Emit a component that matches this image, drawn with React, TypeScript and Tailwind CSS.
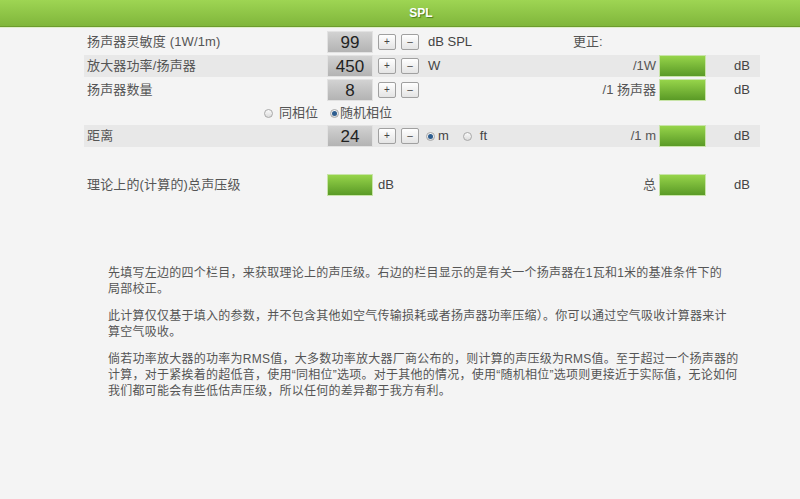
import React from "react";

const font = { fontFamily: '"Liberation Sans", Arial, "Noto Sans CJK SC", sans-serif' };

function NumBox({ value }: { value?: string }) {
  return (
    <div className="w-[46px] h-[22px] flex items-center justify-center bg-gradient-to-b from-[#d2d2d2] to-[#b3b3b3] border border-[#e2e2e2] text-[17px] text-[#222] leading-none">
      {value}
    </div>
  );
}

function GreenBox({ wide }: { wide?: boolean }) {
  return (
    <div className={`${wide ? "w-[46px]" : "w-[47px]"} h-[22px] bg-gradient-to-b from-[#96d44a] to-[#5a9a26] border border-[#c8e4a8]`} />
  );
}

function StepBtn({ label }: { label: string }) {
  return (
    <button className="w-[18px] h-[16px] flex items-center justify-center border border-[#a0a0a0] rounded-[2px] bg-gradient-to-b from-white to-[#e4e4e4] text-[10px] text-[#444] leading-none">
      {label}
    </button>
  );
}

function Radio({ checked }: { checked?: boolean }) {
  return (
    <span className="w-[9px] h-[9px] rounded-full border border-[#a8a8a8] bg-gradient-to-b from-[#fafafa] to-[#dcdcdc] flex items-center justify-center">
      {checked && <span className="w-[5px] h-[5px] rounded-full bg-[#2d5d8f]" />}
    </span>
  );
}

interface RowProps {
  label: string;
  value?: string;
  unit?: React.ReactNode;
  corr?: string;
  corrLeft?: boolean;
  result?: boolean;
  shaded?: boolean;
  steppers?: boolean;
}

function Row({ label, value, unit, corr, corrLeft, result = true, shaded, steppers = true }: RowProps) {
  return (
    <div className={`flex items-center h-[22px] ${shaded ? "bg-[#e8e8e8]" : ""}`}>
      <div className="w-[243px] pl-[3px] text-[13px] text-[#555] tracking-[0.15px]">{label}</div>
      {value !== undefined ? <NumBox value={value} /> : <GreenBox wide />}
      {steppers && (
        <div className="flex gap-[5px] ml-[5px]">
          <StepBtn label="+" />
          <StepBtn label="–" />
        </div>
      )}
      <div className={`flex-1 text-[13px] text-[#444] flex items-center ${steppers ? "pl-[9px]" : "pl-[5px]"}`}>{unit}</div>
      <div className={`w-[83px] text-[13px] text-[#555] ${corrLeft ? "text-left" : "text-right"}`}>{corr}</div>
      {result ? <div className="ml-[3px]"><GreenBox /></div> : <div className="ml-[3px] w-[47px]" />}
      <div className="w-[54px] text-right pr-[10px] text-[13px] text-[#444]">{result ? "dB" : ""}</div>
    </div>
  );
}

export default function App() {
  return (
    <div className="w-[800px] h-[499px] bg-[#f4f4f4] overflow-hidden" style={font}>
      <div className="h-[27px] bg-gradient-to-b from-[#9ed553] to-[#80b63b] border-b border-[#6c9c2c] flex items-center justify-center pl-[42px]">
        <span className="text-white text-[12px] font-bold [text-shadow:1px_1px_1px_#4e7d1e]">SPL</span>
      </div>
      <div className="h-[1px] bg-[#dfeecb]" />

      <div className="ml-[84px] w-[676px] mt-[3px] flex flex-col gap-[2px]">
        <Row label="扬声器灵敏度 (1W/1m)" value="99" unit="dB SPL" corr="更正:" corrLeft result={false} />
        <Row label="放大器功率/扬声器" value="450" unit="W" corr="/1W" shaded />
        <Row label="扬声器数量" value="8" corr="/1 扬声器" />
        <div className="h-[20px] flex items-center pl-[180px] text-[13px] text-[#555]">
          <Radio />
          <span className="ml-[6px] mr-[12px]">同相位</span>
          <Radio checked />
          <span className="ml-[1px]">随机相位</span>
        </div>
        <Row
          label="距离"
          value="24"
          shaded
          corr="/1 m"
          unit={
            <>
              <span className="-ml-[2px]"><Radio checked /></span>
              <span className="ml-[3px] mr-[14px]">m</span>
              <Radio />
              <span className="ml-[8px]">ft</span>
            </>
          }
        />
        <div className="h-[23px]" />
        <Row label="理论上的(计算的)总声压级" steppers={false} unit="dB" corr="总" />
      </div>

      <div className="ml-[108px] w-[660px] mt-[69px] text-[12px] leading-[16px] text-[#555] tracking-[0.25px]">
        <p className="mb-[11px]">
          先填写左边的四个栏目，来获取理论上的声压级。右边的栏目显示的是有关一个扬声器在1瓦和1米的基准条件下的
          <br />
          局部校正。
        </p>
        <p className="mb-[11px]">
          此计算仅仅基于填入的参数，并不包含其他如空气传输损耗或者扬声器功率压缩）。你可以通过空气吸收计算器来计
          <br />
          算空气吸收。
        </p>
        <p>
          倘若功率放大器的功率为RMS值，大多数功率放大器厂商公布的，则计算的声压级为RMS值。至于超过一个扬声器的
          <br />
          计算，对于紧挨着的超低音，使用“同相位”选项。对于其他的情况，使用“随机相位”选项则更接近于实际值，无论如何
          <br />
          我们都可能会有些低估声压级，所以任何的差异都于我方有利。
        </p>
      </div>
    </div>
  );
}
